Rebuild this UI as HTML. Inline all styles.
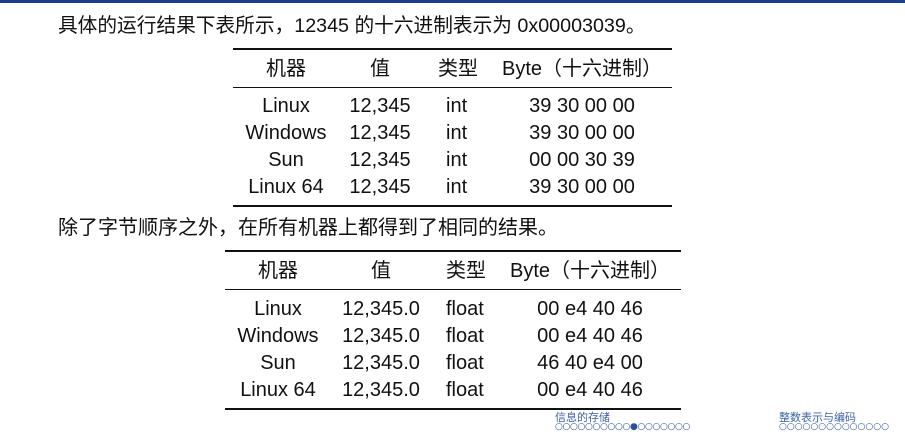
<!DOCTYPE html>
<html><head><meta charset="utf-8"><style>
body{margin:0;width:905px;height:435px;background:#fff;position:relative;overflow:hidden;font-family:"Liberation Sans","Noto Sans CJK SC",sans-serif;color:#111}
.t{position:absolute;font-size:20px;line-height:24px;white-space:nowrap}
.c{width:200px;text-align:center}
.r{position:absolute;background:#111}
.f{position:absolute;font-size:11px;color:#3d63a8;font-family:"Liberation Sans","Noto Sans CJK SC",sans-serif}
.d{position:absolute;font-size:9px;color:#2a4f98;font-family:"DejaVu Sans",sans-serif}
</style></head><body>
<div style="position:absolute;left:0;top:0;width:905px;height:3px;background:#1a3f8e"></div>
<div class="t" style="left:58px;top:14px;font-size:19.7px">具体的运行结果下表所示，12345 的十六进制表示为 0x00003039。</div>
<div class="r" style="left:233px;top:48px;width:439px;height:2px"></div>
<div class="r" style="left:233px;top:87px;width:439px;height:1px"></div>
<div class="r" style="left:233px;top:205px;width:439px;height:2px"></div>
<div class="t c" style="left:186px;top:57px">机器</div>
<div class="t c" style="left:280px;top:57px">值</div>
<div class="t c" style="left:358px;top:57px">类型</div>
<div class="t c" style="left:482px;top:57px">Byte（十六进制）</div>
<div class="t c" style="left:186px;top:93px;line-height:27px">Linux<br>Windows<br>Sun<br>Linux 64</div>
<div class="t c" style="left:280px;top:93px;line-height:27px">12,345<br>12,345<br>12,345<br>12,345</div>
<div class="t" style="left:446px;top:93px;line-height:27px">int<br>int<br>int<br>int</div>
<div class="t c" style="left:482px;top:93px;line-height:27px">39 30 00 00<br>39 30 00 00<br>00 00 30 39<br>39 30 00 00</div>
<div class="t" style="left:58px;top:216px;font-size:20px">除了字节顺序之外，在所有机器上都得到了相同的结果。</div>
<div class="r" style="left:225px;top:250px;width:456px;height:2px"></div>
<div class="r" style="left:225px;top:289px;width:456px;height:1px"></div>
<div class="r" style="left:225px;top:408px;width:456px;height:2px"></div>
<div class="t c" style="left:178px;top:259px">机器</div>
<div class="t c" style="left:281px;top:259px">值</div>
<div class="t c" style="left:366px;top:259px">类型</div>
<div class="t c" style="left:490px;top:259px">Byte（十六进制）</div>
<div class="t c" style="left:178px;top:296px;line-height:27px">Linux<br>Windows<br>Sun<br>Linux 64</div>
<div class="t c" style="left:281px;top:296px;line-height:27px">12,345.0<br>12,345.0<br>12,345.0<br>12,345.0</div>
<div class="t" style="left:446px;top:296px;line-height:27px">float<br>float<br>float<br>float</div>
<div class="t c" style="left:490px;top:296px;line-height:27px">00 e4 40 46<br>00 e4 40 46<br>46 40 e4 00<br>00 e4 40 46</div>
<div class="f" style="left:555px;top:409px">信息的存储</div>
<div class="d" style="left:555px;top:422px;letter-spacing:-0.35px">○○○○○○○○○○●○○○○○○○</div>
<div class="f" style="left:779px;top:409px">整数表示与编码</div>
<div class="d" style="left:779px;top:422px">○○○○○○○○○○○○○○</div>
</body></html>
